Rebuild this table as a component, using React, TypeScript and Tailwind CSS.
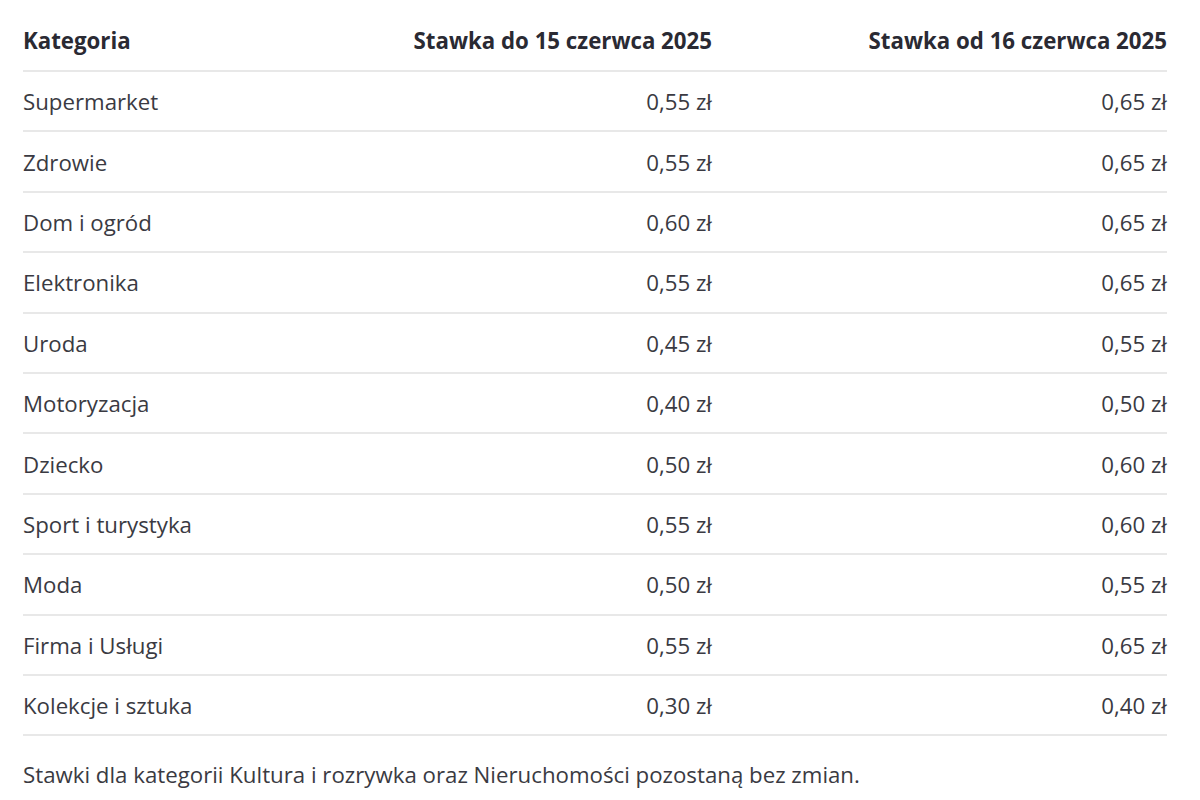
import React from "react";

const rows: [string, string, string][] = [
  ["Supermarket", "0,55 zł", "0,65 zł"],
  ["Zdrowie", "0,55 zł", "0,65 zł"],
  ["Dom i ogród", "0,60 zł", "0,65 zł"],
  ["Elektronika", "0,55 zł", "0,65 zł"],
  ["Uroda", "0,45 zł", "0,55 zł"],
  ["Motoryzacja", "0,40 zł", "0,50 zł"],
  ["Dziecko", "0,50 zł", "0,60 zł"],
  ["Sport i turystyka", "0,55 zł", "0,60 zł"],
  ["Moda", "0,50 zł", "0,55 zł"],
  ["Firma i Usługi", "0,55 zł", "0,65 zł"],
  ["Kolekcje i sztuka", "0,30 zł", "0,40 zł"],
];

export default function App() {
  return (
    <div className="min-h-[800px] w-[1200px] bg-white pl-[23px] pr-[33px] pt-[12px] font-['Open_Sans',sans-serif] text-[22.25px] text-[#3a3a42]">
      <div className="grid grid-cols-[300px_389px_455px]">
        <div className="border-b-2 border-[#e8e8e8] py-[14px] leading-[30px] font-bold text-[#2a2a33]">Kategoria</div>
        <div className="border-b-2 border-[#e8e8e8] py-[14px] text-right leading-[30px] font-bold text-[#2a2a33]">
          Stawka do 15 czerwca 2025
        </div>
        <div className="border-b-2 border-[#e8e8e8] py-[14px] text-right leading-[30px] font-bold text-[#2a2a33]">
          Stawka od 16 czerwca 2025
        </div>
        {rows.map(([name, before, after]) => (
          <React.Fragment key={name}>
            <div className="border-b-2 border-[#e8e8e8] pt-[15.2px] pb-[14px] leading-[29.2px]">{name}</div>
            <div className="border-b-2 border-[#e8e8e8] pt-[15.2px] pb-[14px] text-right leading-[29.2px]">{before}</div>
            <div className="border-b-2 border-[#e8e8e8] pt-[15.2px] pb-[14px] text-right leading-[29.2px]">{after}</div>
          </React.Fragment>
        ))}
      </div>
      <p className="mt-[24px] leading-[30px]">
        Stawki dla kategorii Kultura i rozrywka oraz Nieruchomości pozostaną bez zmian.
      </p>
    </div>
  );
}
